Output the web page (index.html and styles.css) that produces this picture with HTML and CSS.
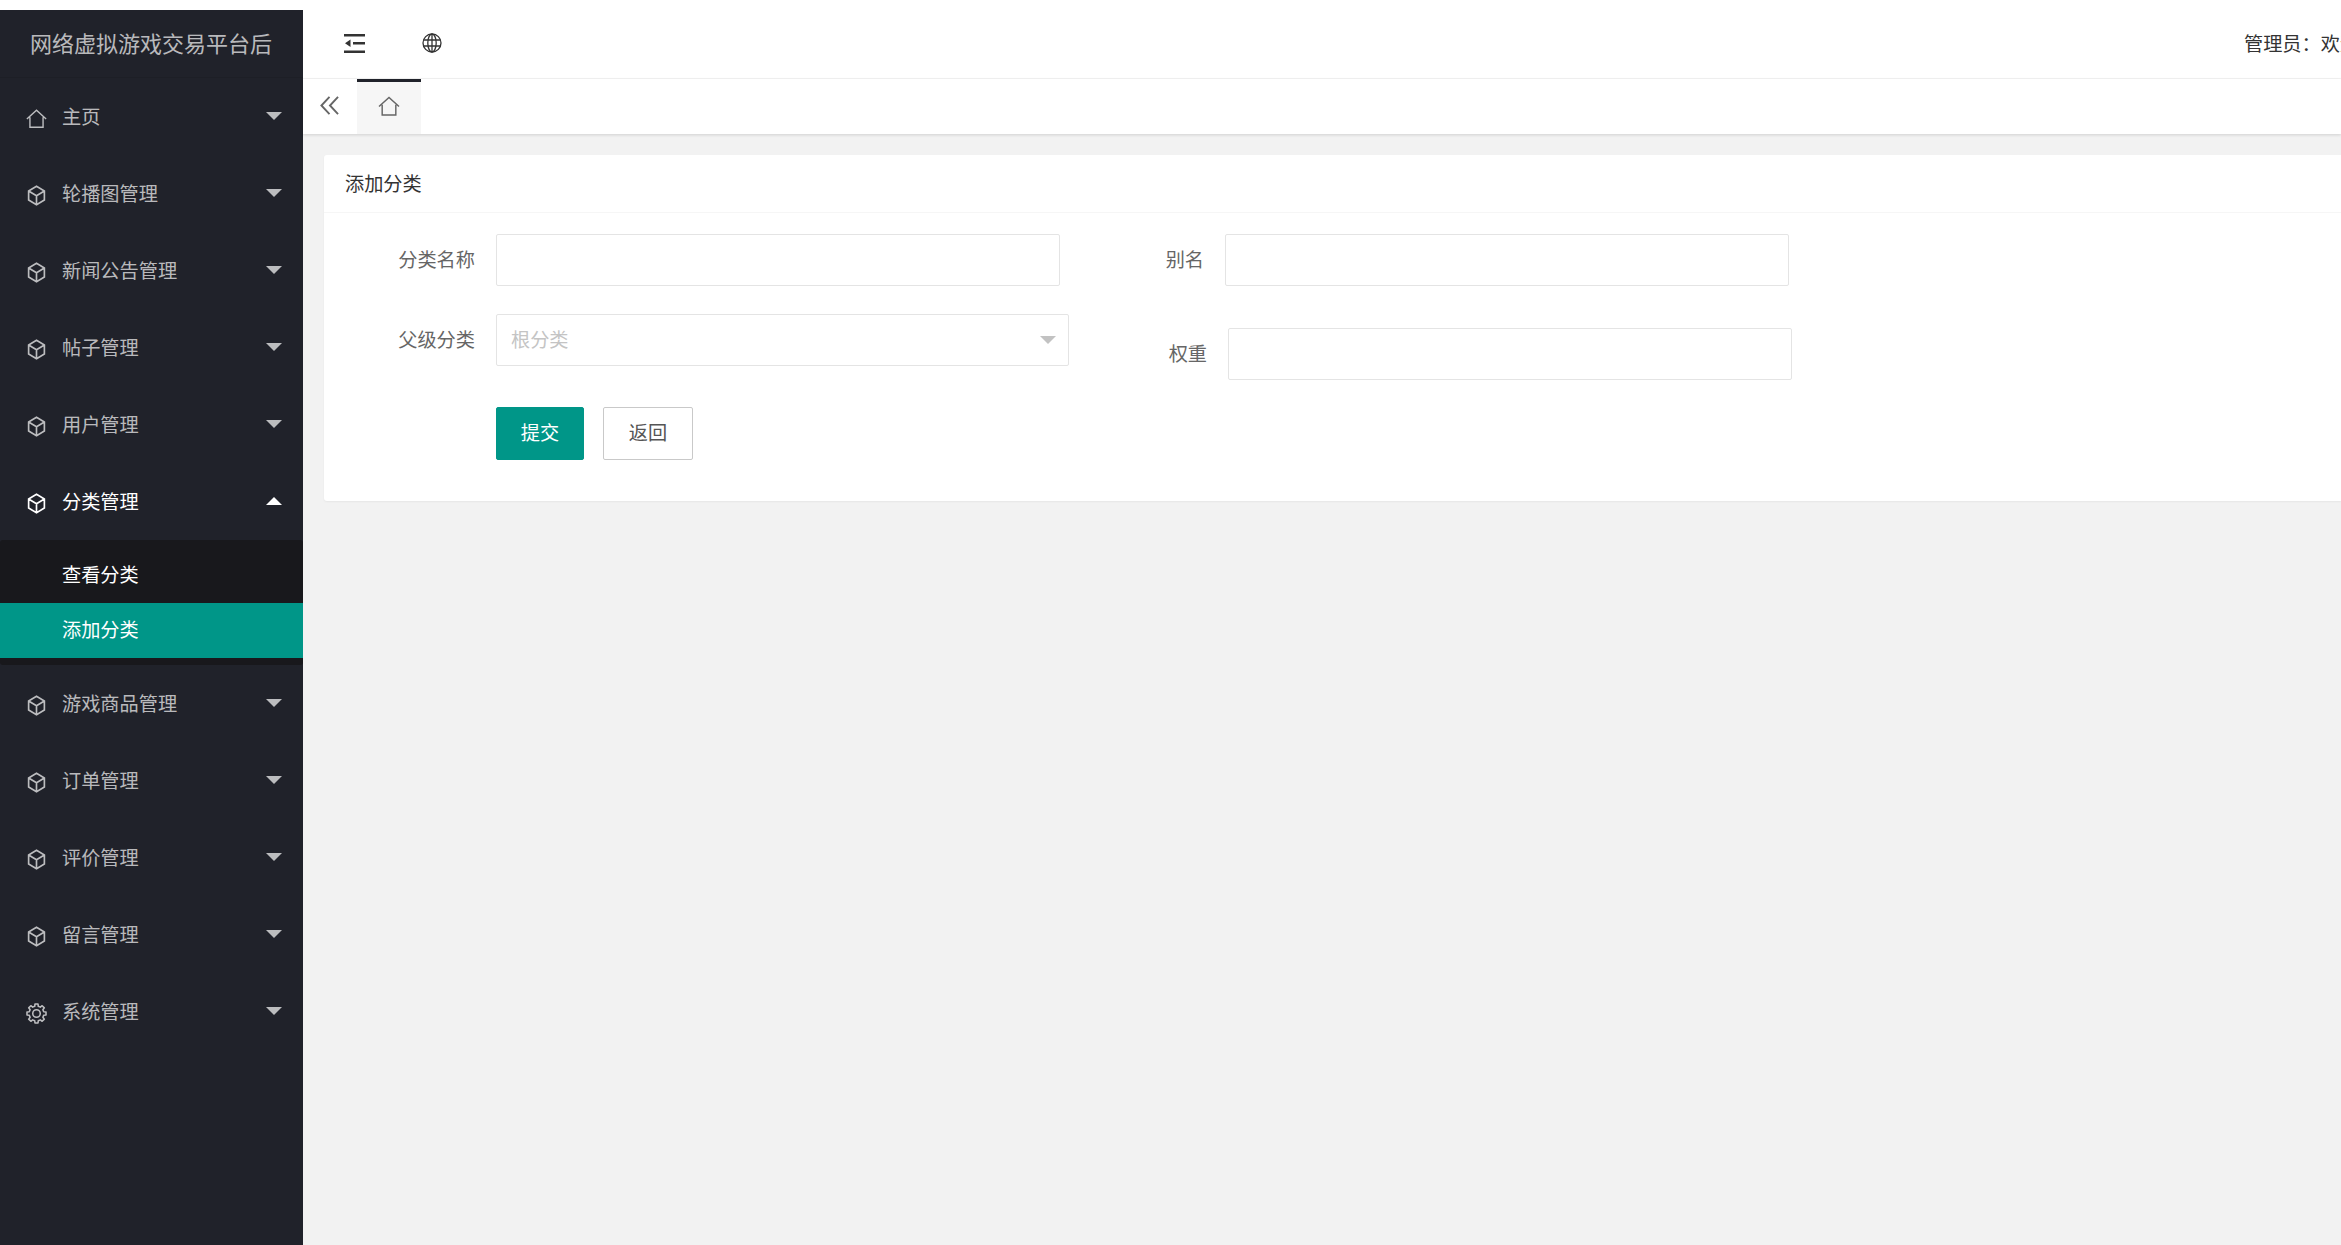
FILE: index.html
```html
<!DOCTYPE html>
<html lang="zh-CN">
<head>
    <meta charset="UTF-8">
    <title>网络虚拟游戏交易平台后台</title>
    <link rel="stylesheet" href="styles.css">
</head>
<body>
    <svg class="sprite" xmlns="http://www.w3.org/2000/svg">
        <symbol id="i-home" viewBox="0 0 24 22">
            <path d="M1 11.500 12 1.500l11 10M4.500 9.500V21h15V9.500" fill="none" stroke="currentColor" stroke-width="1.600"/>
        </symbol>
        <symbol id="i-cube" viewBox="0 0 24 24">
            <path d="M12 1.500 21 6.800v10.400L12 22.500l-9-5.300V6.800zM3 6.800l9 5.400 9-5.400M12 12.200v10.300" fill="none" stroke="currentColor" stroke-width="1.900"/>
        </symbol>
        <symbol id="i-gear" viewBox="0 0 24 24">
            <polygon points="9.94,3.75 10.28,1.14 13.72,1.14 14.06,3.75 16.38,4.71 18.47,3.1 20.9,5.53 19.29,7.62 20.25,9.94 22.86,10.28 22.86,13.72 20.25,14.06 19.29,16.38 20.9,18.47 18.47,20.9 16.38,19.29 14.06,20.25 13.72,22.86 10.28,22.86 9.94,20.25 7.62,19.29 5.53,20.9 3.1,18.47 4.71,16.38 3.75,14.06 1.14,13.72 1.14,10.28 3.75,9.94 4.71,7.62 3.1,5.53 5.53,3.1 7.62,4.71" fill="none" stroke="currentColor" stroke-width="1.800" stroke-linejoin="round"/>
            <circle cx="12" cy="12" r="4.300" fill="none" stroke="currentColor" stroke-width="1.800"/>
        </symbol>
    </svg>

    <div class="app">
        <aside class="side">
            <div class="logo">网络虚拟游戏交易平台后</div>
            <ul class="nav">
                <li class="nav-item"><svg class="nav-icon"><use href="#i-home"/></svg><span>主页</span><i class="arrow"></i></li>
                <li class="nav-item"><svg class="nav-icon"><use href="#i-cube"/></svg><span>轮播图管理</span><i class="arrow"></i></li>
                <li class="nav-item"><svg class="nav-icon"><use href="#i-cube"/></svg><span>新闻公告管理</span><i class="arrow"></i></li>
                <li class="nav-item"><svg class="nav-icon"><use href="#i-cube"/></svg><span>帖子管理</span><i class="arrow"></i></li>
                <li class="nav-item"><svg class="nav-icon"><use href="#i-cube"/></svg><span>用户管理</span><i class="arrow"></i></li>
                <li class="nav-item open"><svg class="nav-icon"><use href="#i-cube"/></svg><span>分类管理</span><i class="arrow"></i></li>
                <li class="sub">
                    <a class="sub-item">查看分类</a>
                    <a class="sub-item active">添加分类</a>
                </li>
                <li class="nav-item"><svg class="nav-icon"><use href="#i-cube"/></svg><span>游戏商品管理</span><i class="arrow"></i></li>
                <li class="nav-item"><svg class="nav-icon"><use href="#i-cube"/></svg><span>订单管理</span><i class="arrow"></i></li>
                <li class="nav-item"><svg class="nav-icon"><use href="#i-cube"/></svg><span>评价管理</span><i class="arrow"></i></li>
                <li class="nav-item"><svg class="nav-icon"><use href="#i-cube"/></svg><span>留言管理</span><i class="arrow"></i></li>
                <li class="nav-item"><svg class="nav-icon"><use href="#i-gear"/></svg><span>系统管理</span><i class="arrow"></i></li>
            </ul>
        </aside>

        <div class="main">
            <header class="topbar">
                <svg class="tool-shrink" viewBox="0 0 21 19">
                    <path d="M0 0h21v2.500H0zM9 8h12v2.500H9zM0 16.500h21V19H0zM1 9.200 6.500 5.500v7.500z" fill="#333"/>
                </svg>
                <svg class="tool-globe" viewBox="0 0 20 20" fill="none" stroke="#333" stroke-width="1.300">
                    <circle cx="10" cy="10" r="9"/>
                    <ellipse cx="10" cy="10" rx="4.200" ry="9"/>
                    <path d="M10 1v18M1.500 7h17M1.500 13h17"/>
                </svg>
                <div class="user">管理员：欢迎您</div>
            </header>

            <nav class="tabs">
                <div class="tabs-back">
                    <svg viewBox="0 0 20 20" fill="none" stroke="#666" stroke-width="2">
                        <path d="M10 1 1.500 10 10 19M19 1l-8.500 9 8.500 9"/>
                    </svg>
                </div>
                <div class="tab"><svg class="tab-icon"><use href="#i-home"/></svg></div>
            </nav>

            <section class="content">
                <div class="card">
                    <div class="card-head">添加分类</div>
                    <form class="card-body">
                        <div class="col">
                            <div class="row">
                                <label class="label">分类名称</label>
                                <input class="input" type="text">
                            </div>
                            <div class="row row-select">
                                <label class="label">父级分类</label>
                                <div class="select">
                                    <input class="input" type="text" placeholder="根分类" readonly>
                                    <i class="select-arrow"></i>
                                </div>
                            </div>
                            <div class="actions">
                                <button class="btn btn-primary" type="button">提交</button>
                                <button class="btn" type="button">返回</button>
                            </div>
                        </div>
                        <div class="col col-right">
                            <div class="row">
                                <label class="label">别名</label>
                                <input class="input" type="text">
                            </div>
                            <div class="row row-weight">
                                <label class="label">权重</label>
                                <input class="input" type="text">
                            </div>
                        </div>
                    </form>
                </div>
            </section>
        </div>
    </div>
</body>
</html>
```

FILE: styles.css
```css
* {
    box-sizing: border-box;
}

html, body {
    height: 100%;
}

body {
    margin: 0;
    background-color: #fff;
    color: #333;
    font-family: "Noto Sans CJK SC", "Noto Sans", sans-serif;
    font-size: 19.2px;
    overflow: hidden;
}

.sprite {
    display: none;
}

.app {
    display: flex;
    height: 100%;
}

/* sidebar */
.side {
    width: 303px;
    flex-shrink: 0;
    margin-top: 10px;
    background-color: #20222a;
    color: rgba(255, 255, 255, 0.7);
}

.logo {
    height: 68px;
    padding-left: 30px;
    font-size: 22px;
    line-height: 65px;
    white-space: nowrap;
    border-bottom: 1px solid #1d1f26;
}

.nav {
    list-style: none;
    margin: 0;
    padding: 0;
}

.nav-item {
    display: flex;
    align-items: center;
    height: 77px;
    padding: 0 21px 0 26px;
}

.nav-item span {
    padding-bottom: 1px;
}

.nav-item.open {
    color: #fff;
}

.nav-icon {
    width: 21px;
    height: 21px;
    margin: 3px 15px 0 0;
    flex-shrink: 0;
}

.arrow {
    margin-left: auto;
    width: 0;
    height: 0;
    border-left: 8px solid transparent;
    border-right: 8px solid transparent;
    border-top: 8px solid rgba(255, 255, 255, 0.7);
    margin-top: -1px;
}

.open .arrow {
    border-top: 0;
    border-bottom: 8px solid #fff;
}

.sub {
    padding: 8px 0 7px;
    background-color: #18181c;
    border-radius: 3px;
}

.sub-item {
    display: block;
    height: 55px;
    padding-left: 62px;
    color: #fff;
    line-height: 53px;
}

.sub-item.active {
    background-color: #009688;
}

/* top area */
.main {
    flex: 1;
    min-width: 0;
    display: flex;
    flex-direction: column;
}

.topbar {
    display: flex;
    align-items: center;
    flex-shrink: 0;
    height: 79px;
    padding: 7px 0 0 41px;
    border-bottom: 1px solid #f4f4f4;
}

.tool-shrink {
    width: 21px;
    height: 19px;
    margin-top: 1px;
}

.tool-globe {
    width: 20px;
    height: 20px;
    margin: 1px 0 0 57px;
}

.user {
    width: 97px;
    margin-left: auto;
    overflow: hidden;
    white-space: nowrap;
    font-size: 19.2px;
}

.tabs {
    display: flex;
    flex-shrink: 0;
    height: 55px;
    background-color: #fff;
    box-shadow: 0 1px 3px rgba(0, 0, 0, 0.14);
    position: relative;
}

.tabs-back {
    display: flex;
    align-items: center;
    width: 54px;
    padding: 0 0 2px 17px;
}

.tabs-back svg {
    width: 19px;
    height: 19px;
}

.tab {
    display: flex;
    align-items: center;
    justify-content: center;
    width: 64px;
    background-color: #f6f6f6;
    border-top: 3px solid #20222a;
}

.tab-icon {
    width: 22px;
    height: 20px;
    margin-top: -4px;
    color: #666;
}

/* content */
.content {
    flex: 1;
    padding: 21px 0 0 21px;
    background-color: #f2f2f2;
}

.card {
    background-color: #fff;
    border-radius: 3px 0 0 3px;
    box-shadow: 0 1px 2px rgba(0, 0, 0, 0.05);
}

.card-head {
    height: 58px;
    padding-left: 21px;
    line-height: 56px;
    border-bottom: 1px solid #f6f6f6;
}

.card-body {
    display: flex;
    height: 288px;
    padding-top: 21px;
}

.col {
    width: 800px;
}

.row {
    display: flex;
    align-items: center;
}

.row-select {
    margin-top: 28px;
}

.row-weight {
    margin-top: 42px;
    margin-left: 3px;
}

.label {
    width: 151px;
    margin-right: 21px;
    padding-bottom: 3px;
    color: #666;
    text-align: right;
}

.input {
    display: block;
    width: 564px;
    height: 52px;
    padding: 0 14px 3px;
    border: 1px solid #e4e4e4;
    border-radius: 2px;
    background-color: #fff;
    color: #333;
    font: inherit;
    outline: none;
}

.input::placeholder {
    color: #c4c4c4;
    opacity: 1;
}

.select {
    position: relative;
}

.select .input {
    width: 573px;
}

.select-arrow {
    position: absolute;
    top: 22px;
    right: 13px;
    width: 0;
    height: 0;
    border-left: 8px solid transparent;
    border-right: 8px solid transparent;
    border-top: 8px solid #c2c2c2;
}

.actions {
    display: flex;
    gap: 19px;
    margin: 41px 0 0 172px;
}

.btn {
    width: 90px;
    height: 53px;
    padding: 0 0 3px;
    border: 1px solid #c9c9c9;
    border-radius: 2px;
    background-color: #fff;
    color: #555;
    font: inherit;
}

.btn-primary {
    width: 88px;
    border-color: #009688;
    background-color: #009688;
    color: #fff;
}

.col-right .label {
    width: 80px;
}
```
